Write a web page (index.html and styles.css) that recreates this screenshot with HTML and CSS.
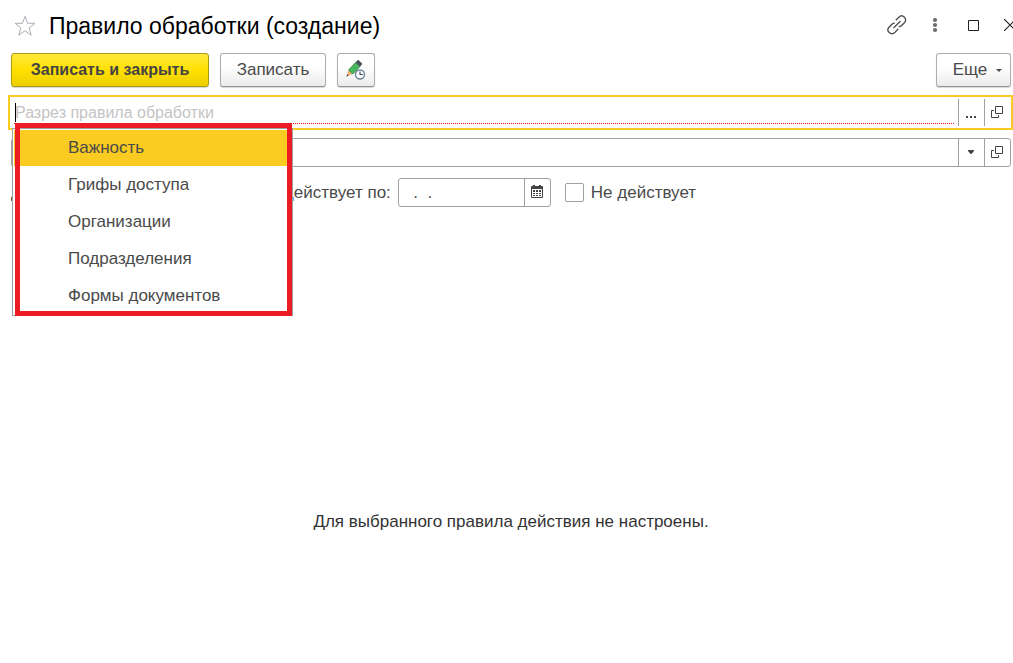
FILE: index.html
```html
<!DOCTYPE html>
<html lang="ru">
<head>
<meta charset="utf-8">
<meta name="viewport" content="width=device-width, initial-scale=1">
<title>Правило обработки (создание)</title>
<link rel="stylesheet" href="styles.css">
</head>
<body>
<header class="titlebar">
  <button class="icon-btn star" type="button" aria-label="В избранное">
    <svg width="22" height="22" viewBox="0 0 22 22" fill="none" stroke="#a9b0b6"><path d="M11 1.500l2.600 6.800h7.400l-5.900 4.600 2.100 7.300-6.200-4.400-6.200 4.400 2.100-7.300L1 8.300h7.400z"/></svg>
  </button>
  <h1 class="title">Правило обработки (создание)</h1>
  <div class="window-tools">
    <button class="icon-btn link" type="button" aria-label="Ссылка">
      <svg width="22" height="22" viewBox="0 0 22 22" fill="none" stroke="#505050" stroke-width="1.4"><path d="M7.500 14l7-7M9.800 6.200l3-3c1.600-1.600 4-1.600 5.600 0s1.600 4 0 5.600l-2.800 2.800c-.8.800-1.700 1.100-2.800 1.100M12.200 14.800l-3.400 3.800c-1.600 1.600-4 1.600-5.600 0s-1.600-4 0-5.600l2.800-2.800c.8-.8 1.700-1.100 2.800-1.100"/></svg>
    </button>
    <button class="icon-btn" type="button" aria-label="Меню">
      <svg width="6" height="16" viewBox="0 0 6 16" fill="#6b6b6b"><circle cx="3" cy="3" r="2.1"/><circle cx="3" cy="8" r="2.1"/><circle cx="3" cy="13" r="2.1"/></svg>
    </button>
    <button class="icon-btn" type="button" aria-label="Развернуть">
      <svg width="11" height="11" viewBox="0 0 11 11" fill="none" stroke="#222"><path d="M.5.5h10v10H.5z"/></svg>
    </button>
    <button class="icon-btn close" type="button" aria-label="Закрыть">
      <svg width="12" height="12" viewBox="0 0 12 12" fill="none" stroke="#222" stroke-width="1.2"><path d="M0 0l12 12M12 0L0 12"/></svg>
    </button>
  </div>
</header>

<main class="form">
  <div class="toolbar">
    <button class="btn btn-primary" type="button">Записать и закрыть</button>
    <button class="btn btn-save" type="button">Записать</button>
    <button class="btn btn-icon" type="button" aria-label="Отложенная запись">
      <svg width="22" height="22" viewBox="0 0 22 22">
        <path d="M1.500 17.500l2-6.500 4.300 4z" fill="#eab56a"/>
        <path d="M1.500 17.500l.7-2.300 1.500 1.400z" fill="#333"/>
        <path d="M3.500 11L10.500 3.500l4.500 4.200L7.800 15z" fill="#45b65a" stroke="#2f7d43" stroke-width=".7"/>
        <path d="M10.500 3.500l2-2.200c.4-.4.8-.4 1.200 0l3.200 3c.4.400.4.800 0 1.200L15 7.700z" fill="#48525e"/>
        <circle cx="15" cy="15.500" r="4.500" fill="#fff" stroke="#6d8499" stroke-width="1.400"/>
        <path d="M15 12.500V15.500h3" fill="none" stroke="#48525e" stroke-width="1.200"/>
      </svg>
    </button>
    <button class="btn btn-more" type="button">Еще
      <svg width="6" height="3" viewBox="0 0 6 3" fill="#4a4a4a"><path d="M0 0h6L3 3z"/></svg>
    </button>
  </div>

  <div class="field field-active">
    <div class="field-box">
      <input class="field-input required" type="text" aria-label="Разрез правила обработки" placeholder="Разрез правила обработки">
      <span class="caret"></span>
    </div>
    <button class="field-btn" type="button" aria-label="Выбрать">
      <svg width="12" height="14" viewBox="0 0 12 14" fill="#444"><path d="M1 11h2v2H1zM5 11h2v2H5zM9 11h2v2H9z"/></svg>
    </button>
    <button class="field-btn" type="button" aria-label="Открыть">
      <svg width="12" height="12" viewBox="0 0 12 12" fill="none" stroke="#444"><path d="M4.500.5h7v7h-7zM3 4.500H.5v7h7V9"/></svg>
    </button>
    <div class="menu" role="listbox" aria-label="Разрез правила обработки">
      <button class="menu-item selected" type="button" role="option" aria-selected="true">Важность</button>
      <button class="menu-item" type="button" role="option">Грифы доступа</button>
      <button class="menu-item" type="button" role="option">Организации</button>
      <button class="menu-item" type="button" role="option">Подразделения</button>
      <button class="menu-item" type="button" role="option">Формы документов</button>
      <div class="highlight-frame"></div>
    </div>
  </div>

  <div class="field field-plain">
    <div class="field-box"><input class="field-input" type="text" aria-label="Значение"></div>
    <button class="field-btn" type="button" aria-label="Список">
      <svg width="6" height="4" viewBox="0 0 6 4" fill="#444"><path d="M0 0h6v1L3.500 4h-1L0 1z"/></svg>
    </button>
    <button class="field-btn" type="button" aria-label="Открыть">
      <svg width="12" height="12" viewBox="0 0 12 12" fill="none" stroke="#444"><path d="M4.500.5h7v7h-7zM3 4.500H.5v7h7V9"/></svg>
    </button>
  </div>

  <div class="period">
    <label for="from">Действует с:</label>
    <div class="field date">
      <input class="field-input" id="from" type="text" value="  .   .">
      <button class="field-btn" type="button" aria-label="Календарь"></button>
    </div>
    <label class="label-to" for="to">Действует по:</label>
    <div class="field date">
      <input class="field-input" id="to" type="text" value="  .  .">
      <button class="field-btn" type="button" aria-label="Календарь">
        <svg width="12" height="13" viewBox="0 0 12 13"><path d="M1 1h1V0h2v1h4V0h2v1h1q1 0 1 1v10q0 1-1 1H1q-1 0-1-1V2q0-1 1-1z" fill="#444"/><path d="M1 4h10v8H1z" fill="#fff"/><path d="M2 5h2v2H2zM5 5h2v2H5zM8 5h2v2H8zM2 8h2v1H2zM5 8h2v1H5zM8 8h2v1H8zM2 10h2v1H2zM5 10h2v1H5zM8 10h2v1H8z" fill="#444"/></svg>
      </button>
    </div>
    <input class="check" id="off" type="checkbox">
    <label for="off">Не действует</label>
  </div>

  <p class="message">Для выбранного правила действия не настроены.</p>
</main>
</body>
</html>
```
FILE: styles.css
```css
* { box-sizing: border-box; }
body {
  margin: 0;
  overflow-x: hidden;
  background: #fff;
  color: #4a4a4a;
  font: 17px/20px "Liberation Sans", Arial, sans-serif;
}
button, input { font: inherit; color: inherit; }
button { cursor: pointer; }
svg { display: block; flex: none; }

.titlebar {
  display: flex;
  align-items: center;
  height: 51px;
  margin-bottom: 2px;
  padding-left: 14px;
}
.icon-btn { padding: 0; border: 0; background: none; }
.title {
  margin: 0 0 0 13px;
  color: #000;
  font-size: 23px;
  font-weight: 400;
  line-height: 28px;
  white-space: nowrap;
}
.window-tools {
  display: flex;
  align-items: center;
  gap: 30px;
  margin: 0 -3px 1px auto;
}
.link { margin-right: -6px; }
.close { margin-left: -5px; }

.form { padding: 0 2px 0 11px; }
.toolbar { display: flex; }
.btn {
  display: flex;
  align-items: center;
  justify-content: center;
  height: 34px;
  padding: 0 16px;
  border: 1px solid #adadad;
  border-bottom-color: #949494;
  border-radius: 3px;
  background: linear-gradient(#fff 40%, #ebebeb);
  box-shadow: 0 1px 1px #d4d4d4;
  white-space: nowrap;
}
.btn-primary {
  width: 198px;
  border-color: #ab9a12;
  background: linear-gradient(#ffe93d, #ffe000 50%, #edcf00);
  font-size: 16px;
  font-weight: 700;
  color: #444;
}
.btn-save { width: 106px; margin-left: 11px; }
.btn-icon { width: 38px; margin-left: 11px; padding: 0; }
.btn-more { gap: 9px; width: 75px; margin-left: auto; padding: 0 8px 0 16px; }

.field {
  position: relative;
  display: flex;
  height: 29px;
  border: 1px solid #a0a0a0;
  border-radius: 3px;
  background: #fff;
}
.field-box { position: relative; flex: 1; display: flex; }
.field-input {
  flex: 1;
  min-width: 0;
  padding: 0 4px;
  border: 0;
  outline: 0;
  background: none;
}
.field-input::placeholder { color: #c4c4c4; opacity: 1; }
.field-btn {
  display: flex;
  align-items: center;
  justify-content: center;
  width: 26px;
  padding: 0 2px 2px 0;
  border: 0;
  border-left: 1px solid #a0a0a0;
  background: none;
}
.field-active {
  height: 35px;
  margin: 8px -2px 0 -3px;
  padding: 2px 1px 2px 4px;
  border: 2px solid #facb20;
  border-radius: 0;
}
.required {
  margin: 0 4px 2px 0;
  padding: 3px 0 0 1px;
  border-bottom: 1px dotted #f00;
  font-size: 16px;
}
.caret {
  position: absolute;
  left: 1px;
  top: 4px;
  width: 1px;
  height: 19px;
  background: #000;
}
.field-plain { margin-top: 8px; }

.menu {
  position: absolute;
  z-index: 1;
  left: 2px;
  top: 31px;
  width: 281px;
  padding: 1px;
  border: 1px solid #a0a0a0;
  background: #fff;
}
.menu-item {
  display: block;
  width: 100%;
  height: 37px;
  padding: 0 0 0 54px;
  border: 0;
  background: none;
  text-align: left;
}
.menu-item.selected { height: 36px; background: #facb20; }
.highlight-frame {
  position: absolute;
  inset: -6px 0 -1px 2px;
  border: 5px solid #ed1c24;
  pointer-events: none;
}

.period {
  display: flex;
  align-items: center;
  margin-top: 11px;
}
.date { width: 153px; margin-left: 7px; }
.date .field-input { padding-left: 5px; white-space: pre; }
.date .field-btn { padding: 0 1px 2px 0; }
.label-to { margin-left: 13px; }
.check {
  appearance: none;
  width: 19px;
  height: 19px;
  margin: 0 7px 0 14px;
  border: 1px solid #a0a0a0;
  border-radius: 2px;
  background: #fff;
}
.message {
  margin: 305px 0 0;
  color: #333;
  text-align: center;
}
```
